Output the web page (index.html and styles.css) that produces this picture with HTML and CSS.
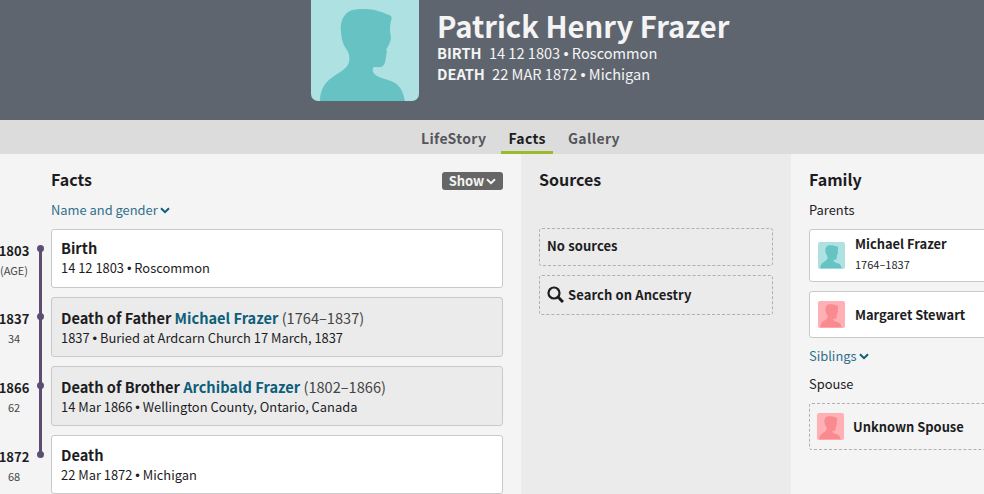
FILE: index.html
```html
<!DOCTYPE html>
<html lang="en">
<head>
<meta charset="utf-8">
<title>Patrick Henry Frazer</title>
<link rel="stylesheet" href="styles.css">
</head>
<body>
<svg class="defs" width="0" height="0" aria-hidden="true">
  <symbol id="person" viewBox="0 0 108 101">
    <path d="M9 101C9 92 12 85 19 79C26 73 36 70 38 62C39 57 38 53 36 50C32 45 30 38 30 31C29 24 31 17 37 12C42 9 47 9 54 9C63 9 71 12 78 15C81 16 81 18 80 21C79 24 79 27 79 30C79 34 81 38 79 42C78 45 76 48 75 50L76 51C75 55 75 59 74 62C73 66 71 67 69 67C66 68 63 66 62 68C61 72 63 74 66 76C72 79 79 80 84 83C90 87 92 92 94 101Z"/>
  </symbol>
  <symbol id="chev" viewBox="0 0 10 7">
    <path d="M1 1.2L5 5.2L9 1.2" fill="none" stroke="currentColor" stroke-width="2"/>
  </symbol>
</svg>

<header class="hero">
  <svg class="avatar avatar-large male"><use href="#person"/></svg>
  <div class="hero-text">
    <h1 class="hero-name">Patrick Henry Frazer</h1>
    <p class="hero-line"><b>BIRTH</b> 14 12 1803 <span class="sep">•</span> Roscommon</p>
    <p class="hero-line"><b>DEATH</b> 22 MAR 1872 <span class="sep">•</span> Michigan</p>
  </div>
</header>

<nav class="tabs">
  <a class="tab">LifeStory</a>
  <a class="tab active">Facts</a>
  <a class="tab">Gallery</a>
</nav>

<main class="columns">
  <section class="col col-facts">
    <div class="facts-head">
      <h2 class="heading">Facts</h2>
      <button class="show">Show<svg class="chev"><use href="#chev"/></svg></button>
    </div>
    <a class="toggle name-gender">Name and gender<svg class="chev"><use href="#chev"/></svg></a>
    <div class="timeline">
      <div class="row">
        <div class="when"><b>1803</b><span>(AGE)</span></div>
        <span class="dot"></span>
        <article class="fact">
          <div class="fact-title">Birth</div>
          <div class="fact-sub">14 12 1803 <span class="sep">•</span> Roscommon</div>
        </article>
      </div>
      <div class="row">
        <div class="when"><b>1837</b><span>34</span></div>
        <span class="dot"></span>
        <article class="fact other">
          <div class="fact-title">Death of Father <a class="link">Michael Frazer</a> <span class="years">(1764–1837)</span></div>
          <div class="fact-sub">1837 <span class="sep">•</span> Buried at Ardcarn Church 17 March, 1837</div>
        </article>
      </div>
      <div class="row">
        <div class="when"><b>1866</b><span>62</span></div>
        <span class="dot"></span>
        <article class="fact other">
          <div class="fact-title">Death of Brother <a class="link">Archibald Frazer</a> <span class="years">(1802–1866)</span></div>
          <div class="fact-sub">14 Mar 1866 <span class="sep">•</span> Wellington County, Ontario, Canada</div>
        </article>
      </div>
      <div class="row">
        <div class="when"><b>1872</b><span>68</span></div>
        <span class="dot"></span>
        <article class="fact last">
          <div class="fact-title">Death</div>
          <div class="fact-sub">22 Mar 1872 <span class="sep">•</span> Michigan</div>
        </article>
      </div>
    </div>
  </section>

  <section class="col col-sources">
    <h2 class="heading">Sources</h2>
    <div class="source-list">
      <div class="dashed source">No sources</div>
      <div class="dashed source search">
        <svg class="search-icon" viewBox="0 0 17 17"><circle cx="7" cy="7" r="5.5" fill="none" stroke="currentColor" stroke-width="2.2"/><path d="M11 11L16 16" stroke="currentColor" stroke-width="3"/></svg>
        Search on Ancestry
      </div>
    </div>
  </section>

  <section class="col col-family">
    <h2 class="heading">Family</h2>
    <div class="label parents-label">Parents</div>
    <div class="person person-tall">
      <svg class="avatar thumb male"><use href="#person"/></svg>
      <div class="person-info">
        <div class="person-name">Michael Frazer</div>
        <div class="person-years">1764–1837</div>
      </div>
    </div>
    <div class="person person-short">
      <svg class="avatar thumb female"><use href="#person"/></svg>
      <div class="person-name">Margaret Stewart</div>
    </div>
    <a class="toggle siblings">Siblings<svg class="chev"><use href="#chev"/></svg></a>
    <div class="label spouse-label">Spouse</div>
    <div class="dashed person-unknown">
      <svg class="avatar thumb female"><use href="#person"/></svg>
      <div class="person-name">Unknown Spouse</div>
    </div>
  </section>
</main>
</body>
</html>
```

FILE: styles.css
```css
* { box-sizing: border-box; }
html, body { margin: 0; height: 494px; overflow: hidden; }
body {
  width: 984px;
  font-family: "Noto Sans CJK SC", "Noto Sans", sans-serif;
  color: #1d1d1f;
  background: #f4f4f4;
}
.defs { position: absolute; }
h1, h2, p { margin: 0; }
b { font-weight: 700; }
.sep { font-family: "Liberation Sans", sans-serif; line-height: 1; }

.hero {
  height: 120px;
  background: #5f656f;
  color: #f4f4f4;
  display: flex;
  padding-left: 311px;
}
.avatar { display: block; flex: none; }
.male { background: #aee1e1; fill: #67c2c3; }
.female { background: #ffb0b5; fill: #f98a8f; }
.avatar-large {
  width: 108px;
  height: 101px;
  border-radius: 0 0 7px 7px;
}
.hero-text { margin-left: 18px; padding-top: 8px; }
.hero-name {
  font-size: 29.2px;
  line-height: 34px;
  font-weight: 700;
}
.hero-line {
  font-size: 14.6px;
  line-height: 21px;
}
.hero-line b { margin-right: 4px; }

.tabs {
  height: 34px;
  background: #dcdcdc;
  display: flex;
  gap: 8px;
  padding-left: 414px;
}
.tab {
  padding: 8px 7px 0;
  font-size: 14px;
  line-height: 20px;
  font-weight: 700;
  letter-spacing: .35px;
  color: #55565b;
}
.tab.active {
  color: #1d1d1f;
  border-bottom: 3px solid #9cba2e;
}

.columns {
  display: grid;
  grid-template-columns: 521px 270px 193px;
  height: 340px;
}
.col { min-width: 0; }
.col-facts { padding: 15px 18px 0 51px; position: relative; }
.col-sources { background: #ebebeb; padding: 15px 18px 0; }
.col-family { padding: 15px 0 0 18px; margin-right: -60px; }

.heading {
  font-size: 16px;
  line-height: 20px;
  font-weight: 700;
}
.facts-head { display: flex; justify-content: space-between; align-items: flex-start; }
.show {
  margin-top: 3px;
  width: 61px;
  height: 18px;
  border: 0;
  border-radius: 3px;
  padding: 0;
  background: #666666;
  color: #f4f4f4;
  font: 700 13px/18px "Noto Sans CJK SC", sans-serif;
}
.chev { width: 10px; height: 7px; margin-left: 2px; vertical-align: 1px; }
.toggle {
  display: block;
  color: #31708a;
  font-size: 12.9px;
  line-height: 20px;
}
.toggle .chev { color: #0e5e7a; }
.name-gender { margin-top: 10px; }

.timeline {
  margin: 8.7px 0 0 -51px;
  position: relative;
  display: flex;
  flex-direction: column;
  gap: 9px;
}
.timeline::before {
  content: "";
  position: absolute;
  left: 39px;
  top: 19px;
  height: 206px;
  width: 3px;
  background: #5a4f73;
}
.row {
  display: grid;
  grid-template-columns: 28px 23px 1fr;
}
.when {
  display: flex;
  flex-direction: column;
  align-items: center;
  padding-top: 13px;
  white-space: nowrap;
}
.when b { font-size: 13px; line-height: 18px; }
.when span { font-size: 11px; line-height: 20px; color: #444; }
.dot {
  position: relative;
  left: 9px;
  top: 16px;
  width: 7px;
  height: 7px;
  border-radius: 50%;
  background: #5a4f73;
}
.fact {
  height: 59.67px;
  border: 1px solid #c9c9c9;
  border-radius: 3px;
  background: #fff;
  padding: 8px 9px 0;
}
.fact.other { background: #ebebeb; padding-top: 10px; }
.fact.last { padding-top: 9px; }
.fact-title {
  font-size: 14.6px;
  line-height: 20px;
  font-weight: 700;
  white-space: nowrap;
}
.fact-sub {
  font-size: 12.9px;
  line-height: 20px;
  white-space: nowrap;
}
.link { color: #0e5e7a; }
.years { font-weight: 400; color: #444; }

.source-list {
  margin-top: 39px;
  display: flex;
  flex-direction: column;
  gap: 9px;
}
.dashed { border: 1px dashed #b0b0b0; border-radius: 3px; }
.source {
  padding: 0 7px 3px;
  height: 38px;
  display: flex;
  align-items: center;
  font-size: 13px;
  font-weight: 700;
  letter-spacing: .1px;
}
.search { height: 40px; gap: 4px; padding-bottom: 1px; }
.search-icon { width: 17px; height: 17px; color: #1d1d1f; }

.label { font-size: 12.9px; line-height: 20px; }
.parents-label { margin-top: 11px; }
.person {
  display: flex;
  align-items: center;
  background: #fff;
  border: 1px solid #c9c9c9;
  border-radius: 3px;
  padding-left: 8px;
  gap: 10px;
  margin-top: 9px;
}
.person-tall { height: 53px; }
.person-info { margin-bottom: 4px; }
.person-short { height: 47px; }
.thumb { width: 27px; height: 27px; border-radius: 2px; }
.person-name {
  font-size: 12.9px;
  line-height: 20px;
  font-weight: 700;
}
.person-years { font-size: 11px; line-height: 18px; margin-top: 1px; }
.siblings { margin-top: 8px; }
.spouse-label { margin-top: 8px; }
.person-unknown {
  margin-top: 9px;
  height: 47px;
  display: flex;
  align-items: center;
  padding-left: 7px;
  gap: 9px;
}
```
